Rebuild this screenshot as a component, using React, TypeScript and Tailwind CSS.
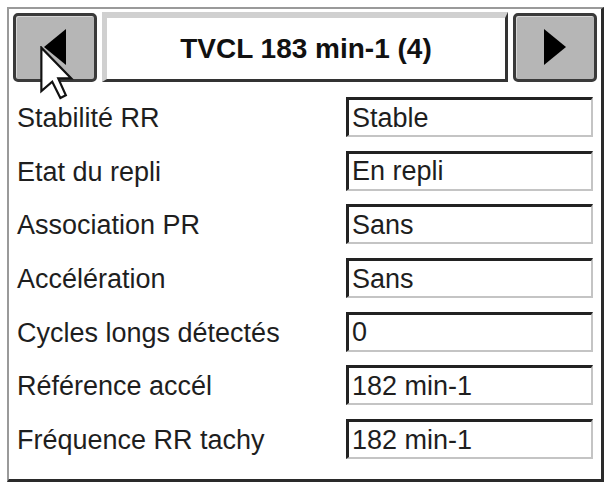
const rows: { label: string; value: string }[] = [
  { label: 'Stabilité RR', value: 'Stable' },
  { label: 'Etat du repli', value: 'En repli' },
  { label: 'Association PR', value: 'Sans' },
  { label: 'Accélération', value: 'Sans' },
  { label: 'Cycles longs détectés', value: '0' },
  { label: 'Référence accél', value: '182 min-1' },
  { label: 'Fréquence RR tachy', value: '182 min-1' },
]

function NavButton({ dir }: { dir: 'left' | 'right' }) {
  return (
    <button
      type="button"
      className="flex h-[69px] w-[84px] shrink-0 items-center justify-center rounded-[5px] border-[3px] border-[#3a3a3a] bg-[#b6b6b6] shadow-[inset_1px_1px_0_#d6d6d6]"
    >
      <svg width="22" height="36" viewBox="0 0 22 36">
        {dir === 'left' ? <polygon points="0,18 22,0 22,36" fill="#000" /> : <polygon points="0,0 22,18 0,36" fill="#000" />}
      </svg>
    </button>
  )
}

function Cursor() {
  return (
    <svg className="pointer-events-none absolute left-[40px] top-[46px]" width="34" height="55" viewBox="-0.5 -0.5 12.5 20">
      <polygon points="0,0 0,16 4,12.5 7,18.5 9,17.5 6.2,11.3 11,11.3" fill="#fff" stroke="#111" strokeWidth="0.8" strokeLinejoin="miter" />
    </svg>
  )
}

export default function App() {
  return (
    <div className="relative h-[490px] w-[613px] bg-white pl-[7px] pt-[7px] font-['Liberation_Sans',Arial,sans-serif] text-[#1e1e1e]">
      <div className="h-[475px] w-[597px] border-l-2 border-t-2 border-b-[3px] border-r-[3px] border-l-[#9a9a9a] border-t-[#9a9a9a] border-b-[#2a2a2a] border-r-[#2a2a2a]">
        <div className="flex items-center gap-[5px] pl-[4px] pt-[3px]">
          <NavButton dir="left" />
          <div className="flex h-[70px] w-[406px] items-center justify-center border-b-[3px] border-l-[5px] border-r-[3px] border-t-[6px] border-b-[#333] border-l-[#d0d0d0] border-r-[#333] border-t-[#d0d0d0] bg-white">
            <span className="text-[28px] font-bold leading-none text-[#111]">TVCL 183 min-1 (4)</span>
          </div>
          <NavButton dir="right" />
        </div>
        <div className="mt-[15px] flex flex-col gap-[13.7px] pl-[8px]">
          {rows.map((r) => (
            <div key={r.label} className="flex h-[40px] items-center">
              <span className="mt-[3px] w-[329px] text-[27px] leading-none">{r.label}</span>
              <div className="flex h-[40px] w-[247px] items-center border-b-2 border-l-[3px] border-r-2 border-t-[3px] border-b-[#c4c4c4] border-l-[#222] border-r-[#c4c4c4] border-t-[#222] bg-white pl-[3px]">
                <span className="mt-[1px] text-[27px] leading-none">{r.value}</span>
              </div>
            </div>
          ))}
        </div>
      </div>
      <Cursor />
    </div>
  )
}
